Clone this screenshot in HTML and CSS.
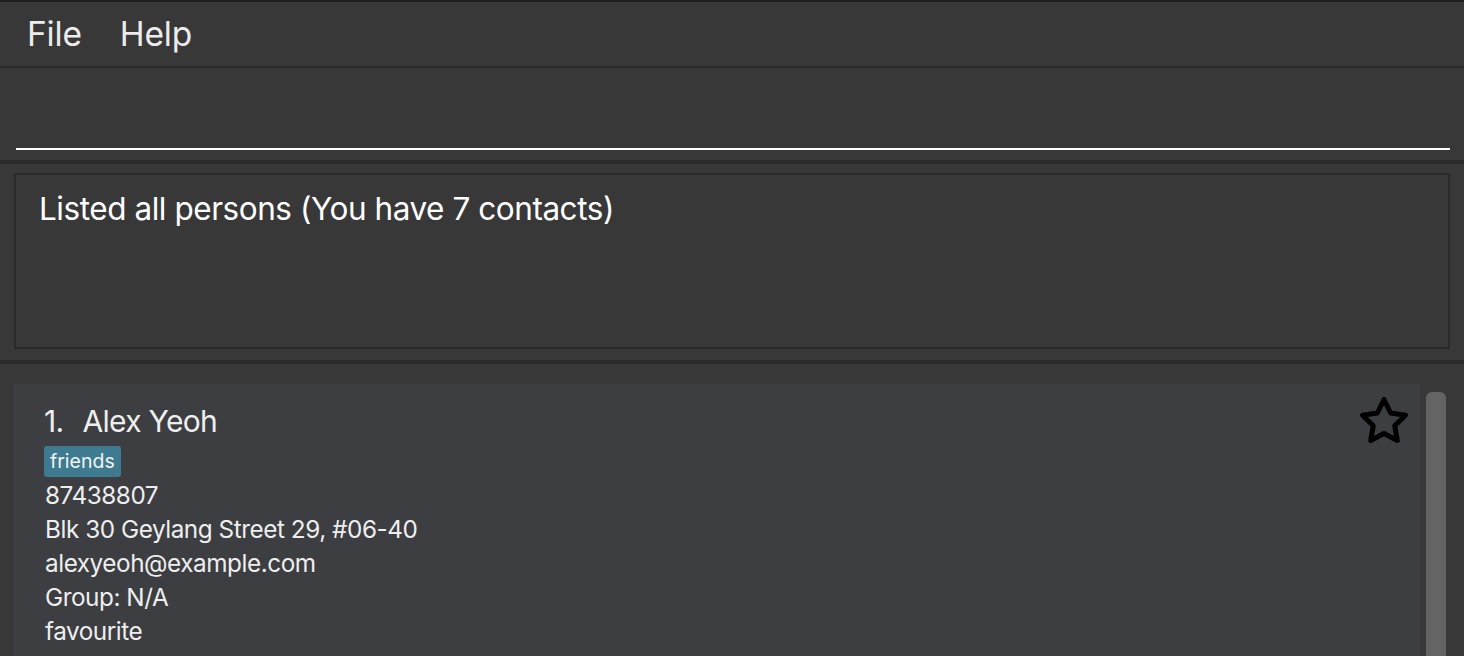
FILE: index.html
```
<!DOCTYPE html>
<html>
<head>
<meta charset="utf-8">
<link rel="stylesheet" href="styles.css">
</head>
<body>
<div class="app">
  <div class="menubar">
    <span class="menu-item">File</span>
    <span class="menu-item">Help</span>
  </div>
  <div class="command">
    <div class="command-input"></div>
  </div>
  <div class="divider"></div>
  <div class="result-area">
    <div class="result-box">Listed all persons (You have 7 contacts)</div>
  </div>
  <div class="divider"></div>
  <div class="list-area">
    <div class="list">
      <div class="card">
        <div class="card-body">
          <div class="name"><span class="index">1.</span><span>Alex Yeoh</span></div>
          <div class="tags"><span class="tag">friends</span></div>
          <div class="line">87438807</div>
          <div class="line">Blk 30 Geylang Street 29, #06-40</div>
          <div class="line">alexyeoh@example.com</div>
          <div class="line">Group: N/A</div>
          <div class="line">favourite</div>
        </div>
        <svg class="star" viewBox="0 0 52 50" width="52" height="50">
          <path d="M26 3.5 L32.6 17 L47.5 19.2 L36.7 29.7 L39.3 44.5 L26 37.5 L12.7 44.5 L15.3 29.7 L4.5 19.2 L19.4 17 Z" fill="none" stroke="#000" stroke-width="5" stroke-linejoin="round"/>
        </svg>
      </div>
    </div>
    <div class="scrollbar"><div class="thumb"></div></div>
  </div>
</div>
</body>
</html>
```
FILE: styles.css
```
html, body {
  margin: 0;
  padding: 0;
  background: #383838;
  overflow: hidden;
}
.app {
  width: 1464px;
  height: 656px;
  display: flex;
  flex-direction: column;
  border-top: 2px solid #1e1e1e;
  box-sizing: border-box;
  font-family: Inter, "Noto Sans", sans-serif;
}
.menubar {
  height: 64px;
  flex: none;
  display: flex;
  align-items: center;
  gap: 38px;
  padding-left: 27px;
  border-bottom: 2px solid #2b2b2b;
  background: #383838;
}
.menu-item {
  color: #ececec;
  font-size: 33.5px;
  letter-spacing: -0.2px;
}
.command {
  height: 92px;
  flex: none;
  box-sizing: border-box;
  padding: 0 14px 10px 16px;
  display: flex;
  align-items: flex-end;
}
.command-input {
  width: 100%;
  height: 0;
  border-bottom: 2px solid #ffffff;
}
.divider {
  height: 4px;
  flex: none;
  background: #2b2b2b;
}
.result-area {
  height: 196px;
  flex: none;
  box-sizing: border-box;
  padding: 9px 14px 11px 14px;
}
.result-box {
  height: 100%;
  box-sizing: border-box;
  border: 2px solid #2a2a2a;
  color: #ffffff;
  font-size: 31.5px;
  letter-spacing: -0.45px;
  padding: 14px 0 0 23px;
}
.list-area {
  flex: 1;
  display: flex;
  padding: 20px 18px 0 14px;
  gap: 6px;
  overflow: hidden;
}
.list {
  flex: 1;
}
.card {
  background: #3c3e41;
  height: 300px;
  display: flex;
  justify-content: space-between;
  padding: 20px 10px 0 30px;
  box-sizing: border-box;
}
.card-body {
  color: #eeeeee;
}
.name {
  display: flex;
  gap: 19px;
  font-size: 30px;
  letter-spacing: -0.7px;
  line-height: 34px;
  margin-bottom: 8px;
  color: #eeeeee;
}
.tags {
  display: flex;
  margin-bottom: 1px;
}
.tag {
  background: #3e7b91;
  color: #f4f4f4;
  font-size: 19.5px;
  line-height: 31px;
  padding: 0 6px 0 6px;
  border-radius: 3px;
  margin-left: 0;
}
.line {
  font-size: 24.3px;
  line-height: 34px;
  letter-spacing: -0.45px;
  margin-left: 1px;
}
.star {
  margin-top: -8px;
  flex: none;
}
.scrollbar {
  width: 20px;
  flex: none;
  padding-top: 8px;
}
.thumb {
  width: 20px;
  height: 400px;
  background: #646464;
  border-radius: 6px 6px 0 0;
}
```
